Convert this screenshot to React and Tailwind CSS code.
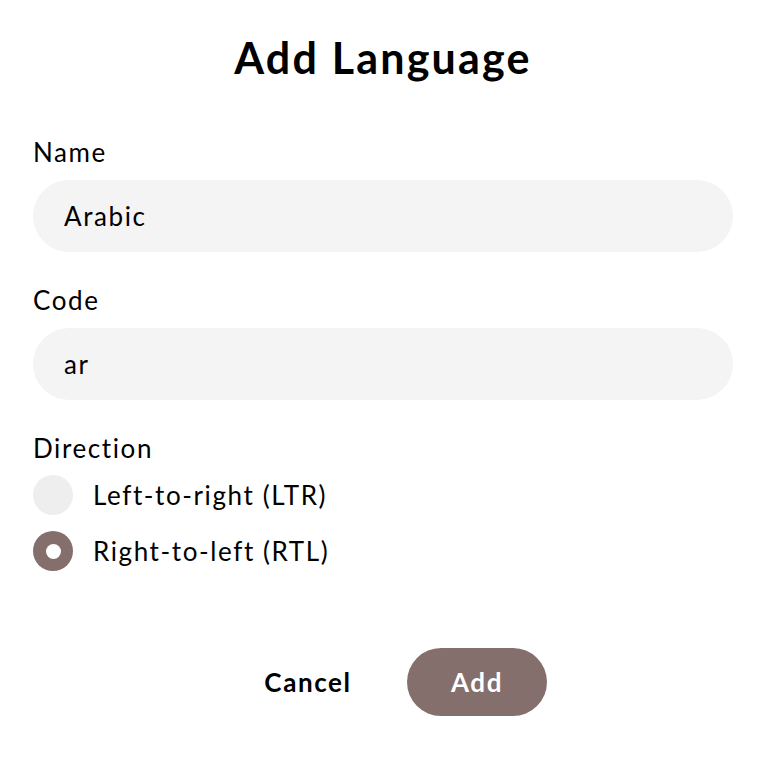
import React, { useState } from 'react';

const font = { fontFamily: 'Lato, "Noto Sans", sans-serif' };

const Field = ({ label, value, onChange, className = '' }) => (
  <div className={className}>
    <label className="block text-[26px] leading-[32px] text-black">{label}</label>
    <input
      className="mt-[12px] block w-full h-[72px] rounded-full bg-[#f4f4f4] px-[31px] text-[26px] tracking-[1.6px] text-black outline-none"
      value={value}
      onChange={onChange}
    />
  </div>
);

const Radio = ({ checked, label, onClick, className = '' }) => (
  <button type="button" onClick={onClick} className={`flex items-center h-[40px] tracking-[1.6px] ${className}`}>
    <span
      className={`flex items-center justify-center w-[40px] h-[40px] rounded-full ${
        checked ? 'bg-[#846f6c]' : 'bg-[#eeeeee]'
      }`}
    >
      {checked && <span className="block w-[15px] h-[15px] rounded-full bg-white" />}
    </span>
    <span className="ml-[20px] text-[26px] leading-[32px] text-black">{label}</span>
  </button>
);

const App = () => {
  const [name, setName] = useState('Arabic');
  const [code, setCode] = useState('ar');
  const [dir, setDir] = useState('rtl');

  return (
    <div className="w-[764px] h-[760px] bg-white pl-[33px] pr-[31px] pt-[34px] tracking-[1.6px]" style={font}>
      <h1 className="text-center text-[43px] leading-[48px] font-bold tracking-[2.2px] text-black">Add Language</h1>

      <Field className="mt-[54px]" label="Name" value={name} onChange={e => setName(e.target.value)} />
      <Field className="mt-[32px]" label="Code" value={code} onChange={e => setCode(e.target.value)} />

      <div className="mt-[32px]">
        <div className="text-[26px] leading-[32px] text-black">Direction</div>
        <Radio className="mt-[11px]" checked={dir === 'ltr'} label="Left-to-right (LTR)" onClick={() => setDir('ltr')} />
        <Radio className="mt-[16px]" checked={dir === 'rtl'} label="Right-to-left (RTL)" onClick={() => setDir('rtl')} />
      </div>

      <div className="mt-[77px] flex justify-center gap-[29px] pl-[19px]">
        <button type="button" className="w-[140px] h-[68px] rounded-full text-[26px] font-bold tracking-[1.6px] text-black">
          Cancel
        </button>
        <button type="button" className="w-[140px] h-[68px] rounded-full bg-[#846f6c] text-[26px] font-bold tracking-[1.6px] text-white">
          Add
        </button>
      </div>
    </div>
  );
};

export default App;
